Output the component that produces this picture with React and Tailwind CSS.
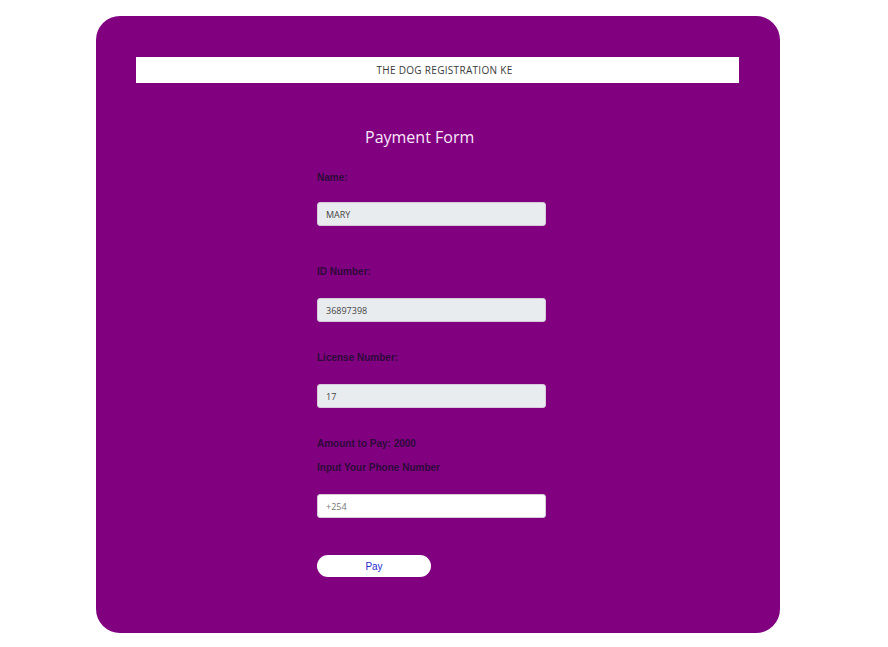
import React from 'react';

const labelCls = "block h-[14px] leading-[14px] text-[10px] font-bold text-[#2e0a3a] font-['Liberation_Sans',Arial,sans-serif]";
const inputCls = "block w-[229px] h-[24px] rounded-[3px] border border-[#d8c8dc] px-[8px] text-[9px] text-[#444] font-['Open_Sans',sans-serif] outline-none";

export default function App() {
  return (
    <div className="w-[888px] h-[647px] bg-white pt-[16px]">
      <div className="ml-[96px] w-[684px] h-[617px] rounded-[24px] bg-[#800080] pt-[41px] px-[40px]">
        {/* header bar */}
        <div className="w-[603px] h-[26px] bg-white flex items-center justify-center pl-[14px]">
          <span className="text-[10px] tracking-[0.03em] text-[#3a3a3a] font-['Open_Sans',sans-serif]">THE DOG REGISTRATION KE</span>
        </div>

        {/* form */}
        <div className="ml-[181px] w-[229px]">
          <h2 className="mt-[44px] ml-[48px] h-[20px] leading-[20px] text-[16px] text-[#fbe6fb] font-['Open_Sans',sans-serif]">Payment Form</h2>

          <label className={`${labelCls} mt-[24px]`}>Name:</label>
          <input className={`${inputCls} mt-[17px] bg-[#e9ecef]`} value="MARY" readOnly />

          <label className={`${labelCls} mt-[39px]`}>ID Number:</label>
          <input className={`${inputCls} mt-[19px] bg-[#e9ecef]`} value="36897398" readOnly />

          <label className={`${labelCls} mt-[29px]`}>License Number:</label>
          <input className={`${inputCls} mt-[19px] bg-[#e9ecef]`} value="17" readOnly />

          <p className={`${labelCls} mt-[29px]`}>Amount to Pay: 2000</p>
          <label className={`${labelCls} mt-[10px]`}>Input Your Phone Number</label>
          <input className={`${inputCls} mt-[19px] bg-white placeholder:text-[#777]`} placeholder="+254" />

          <button className="block mt-[37px] w-[114px] h-[22px] rounded-full bg-white text-[10px] text-[#2a2ad0] font-['Liberation_Sans',Arial,sans-serif]">
            Pay
          </button>
        </div>
      </div>
    </div>
  );
}
